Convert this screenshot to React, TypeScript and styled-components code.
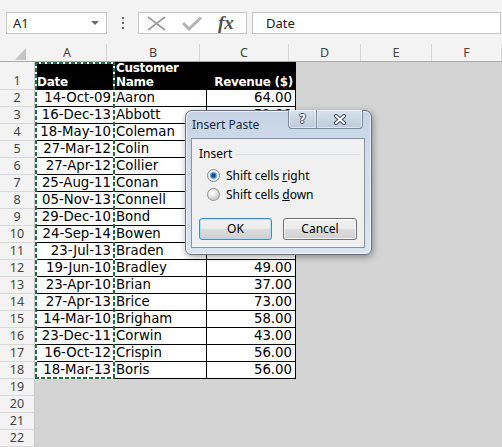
import React from 'react';
import styled, { createGlobalStyle } from 'styled-components';

const GlobalStyle = createGlobalStyle`
  html, body {
    margin: 0;
    padding: 0;
    background: #d4d4d4;
  }
  body {
    font-family: "Noto Sans", "Open Sans", sans-serif;
  }
`;

// sheet data
const COLS = [
  { label: 'A', width: 79 },
  { label: 'B', width: 93 },
  { label: 'C', width: 89 },
  { label: 'D', width: 72 },
  { label: 'E', width: 71 },
  { label: 'F', width: 70 },
];

const ROWS: [string, string, string][] = [
  ['14-Oct-09', 'Aaron', '64.00'],
  ['16-Dec-13', 'Abbott', '51.00'],
  ['18-May-10', 'Coleman', '72.00'],
  ['27-Mar-12', 'Colin', '44.00'],
  ['27-Apr-12', 'Collier', '39.00'],
  ['25-Aug-11', 'Conan', '61.00'],
  ['05-Nov-13', 'Connell', '47.00'],
  ['29-Dec-10', 'Bond', '53.00'],
  ['24-Sep-14', 'Bowen', '68.00'],
  ['23-Jul-13', 'Braden', '50.00'],
  ['19-Jun-10', 'Bradley', '49.00'],
  ['23-Apr-10', 'Brian', '37.00'],
  ['27-Apr-13', 'Brice', '73.00'],
  ['14-Mar-10', 'Brigham', '58.00'],
  ['23-Dec-11', 'Corwin', '43.00'],
  ['16-Oct-12', 'Crispin', '56.00'],
  ['18-Mar-13', 'Boris', '56.00'],
];

const EMPTY_ROWS = [19, 20, 21, 22];

// window
const Window = styled.div`
  width: 502px;
  height: 447px;
  position: relative;
  overflow: hidden;
  display: flex;
  flex-direction: column;
`;

// formula bar
const FormulaBar = styled.div`
  height: 44px;
  box-sizing: border-box;
  padding: 12px 1px 0 6px;
  background: #f3f3f3;
  display: flex;
  align-items: flex-start;
`;

const NameBox = styled.div`
  width: 101px;
  height: 22px;
  box-sizing: border-box;
  border: 1px solid #c6c6c6;
  background: #fff;
  display: flex;
  align-items: center;
  justify-content: space-between;
  padding: 0 7px 0 6px;
  font-size: 13px;
  color: #222;
`;

const DropArrow = styled.span`
  width: 0;
  height: 0;
  border-left: 4px solid transparent;
  border-right: 4px solid transparent;
  border-top: 4px solid #6a6a6a;
`;

const Dots = styled.div`
  width: 31px;
  height: 22px;
  display: flex;
  flex-direction: column;
  align-items: center;
  justify-content: center;
  gap: 3px;
  span {
    width: 2px;
    height: 2px;
    background: #666;
  }
`;

const FxTools = styled.div`
  width: 109px;
  height: 22px;
  box-sizing: border-box;
  border: 1px solid #c6c6c6;
  background: #fff;
  display: flex;
  align-items: center;
  padding-left: 8px;
  gap: 16px;
`;

const FxLabel = styled.span`
  font-family: "Liberation Serif", serif;
  font-style: italic;
  font-weight: bold;
  font-size: 19px;
  color: #505050;
  line-height: 20px;
`;

const FormulaInput = styled.div`
  flex: 1;
  height: 22px;
  margin-left: 5px;
  box-sizing: border-box;
  border: 1px solid #c6c6c6;
  background: #fff;
  padding-left: 13px;
  font-size: 13px;
  line-height: 20px;
  color: #222;
`;

// sheet
const Sheet = styled.div`
  flex: 1;
  position: relative;
  background: #d4d4d4;
  display: flex;
  flex-direction: column;
`;

const HeaderRow = styled.div`
  height: 18px;
  display: flex;
  background: #f3f3f3;
  box-sizing: border-box;
  border-bottom: 1px solid #ababab;
`;

const Corner = styled.div`
  width: 35px;
  display: flex;
  align-items: flex-end;
  justify-content: flex-end;
  padding: 0 2px 1px 0;
  box-sizing: border-box;
`;

const ColHead = styled.div<{ $w: number }>`
  width: ${(p) => p.$w}px;
  flex: none;
  box-sizing: border-box;
  border-right: 1px solid #d5d5d5;
  text-align: center;
  font-size: 12.5px;
  line-height: 17px;
  color: #444;
`;

const Row = styled.div<{ $h: number }>`
  height: ${(p) => p.$h}px;
  display: grid;
  grid-template-columns: 35px 79px 93px 89px;
`;

const RowHead = styled.div`
  box-sizing: border-box;
  background: #f3f3f3;
  border-bottom: 1px solid #d8d8d8;
  border-right: 1px solid #c8c8c8;
  display: flex;
  align-items: flex-end;
  justify-content: center;
  font-size: 12.5px;
  line-height: 16px;
  color: #444;
`;

const Cell = styled.div<{
  $align: 'left' | 'right';
  $head?: boolean;
  $divider?: boolean;
}>`
  box-sizing: border-box;
  background: ${(p) => (p.$head ? '#000' : '#fff')};
  color: ${(p) => (p.$head ? '#fff' : '#000')};
  font-family: "DejaVu Sans", Verdana, sans-serif;
  font-size: ${(p) => (p.$head ? '12px' : '13.3px')};
  letter-spacing: ${(p) => (p.$head ? '-0.3px' : '0')};
  font-weight: ${(p) => (p.$head ? 'bold' : 'normal')};
  line-height: ${(p) => (p.$head ? '14px' : '16px')};
  border-bottom: 1px solid #000;
  border-right: ${(p) => (p.$divider ? '1px solid #000' : 'none')};
  display: flex;
  align-items: flex-end;
  justify-content: ${(p) => (p.$align === 'right' ? 'flex-end' : 'flex-start')};
  text-align: ${(p) => p.$align};
  padding: ${(p) => (p.$align === 'right' ? `0 ${p.$head ? 2 : 3}px 0 0` : '0 0 0 2px')};
  white-space: ${(p) => (p.$head ? 'normal' : 'nowrap')};
  overflow: hidden;
`;

const dashH = 'repeating-linear-gradient(90deg, #1f6e43 0 4px, #fff 4px 6px)';
const dashV = 'repeating-linear-gradient(180deg, #1f6e43 0 4px, #fff 4px 6px)';

// copy marquee lies over column A
const Marquee = styled.div`
  position: absolute;
  left: 35px;
  top: 18px;
  width: 80px;
  height: 317px;
  pointer-events: none;
  background:
    ${dashH} top left / 100% 2px no-repeat,
    ${dashH} bottom left / 100% 2px no-repeat,
    ${dashV} top left / 2px 100% no-repeat,
    ${dashV} top right / 2px 100% no-repeat;
`;

// dialog
const Dialog = styled.div`
  position: absolute;
  left: 185px;
  top: 110px;
  width: 187px;
  height: 145px;
  box-sizing: border-box;
  border: 1px solid #66717f;
  border-radius: 7px 7px 6px 6px;
  background: linear-gradient(180deg, #c6d4e6 0%, #d3deeb 40%, #dbe4ef 100%);
  box-shadow: inset 0 0 0 1px rgba(255, 255, 255, 0.6), 1px 2px 7px rgba(0, 0, 0, 0.35);
  display: flex;
  flex-direction: column;
  font-family: "Noto Sans", "Open Sans", sans-serif;
  font-size: 12px;
  color: #000;
`;

const TitleBar = styled.div`
  height: 27px;
  display: flex;
  justify-content: space-between;
  align-items: flex-start;
  padding: 0 8px 0 6px;
`;

const Title = styled.div`
  padding-top: 6px;
  line-height: 16px;
  color: #1a2a3c;
`;

const CaptionButtons = styled.div`
  display: flex;
  margin-top: -1px;
`;

const CapBtn = styled.div<{ $w: number; $side: 'left' | 'right' }>`
  width: ${(p) => p.$w}px;
  height: 19px;
  box-sizing: border-box;
  border: 1px solid #7a8ba2;
  border-top: none;
  border-left: ${(p) => (p.$side === 'right' ? 'none' : '1px solid #7a8ba2')};
  border-radius: ${(p) => (p.$side === 'left' ? '0 0 0 4px' : '0 0 4px 0')};
  background: linear-gradient(180deg, #d9e3ee 0%, #c9d6e5 50%, #bccbdd 100%);
  box-shadow: inset 0 0 0 1px rgba(255, 255, 255, 0.45);
  display: flex;
  align-items: center;
  justify-content: center;
`;

const HelpGlyph = styled.span`
  font-family: "DejaVu Sans", sans-serif;
  font-weight: bold;
  font-size: 12px;
  line-height: 12px;
  color: #fff;
  text-shadow: 1px 0 0 #3d4b5e, -1px 0 0 #3d4b5e, 0 1px 0 #3d4b5e, 0 -1px 0 #3d4b5e;
`;

const Panel = styled.div`
  flex: 1;
  margin: 0 6px 6px 5px;
  box-sizing: border-box;
  background: #f0f0f0;
  border: 1px solid #8494a8;
  padding: 7px 4px 0 7px;
  display: flex;
  flex-direction: column;
`;

const GroupHead = styled.div`
  display: flex;
  align-items: center;
  gap: 4px;
  line-height: 16px;
  &::after {
    content: '';
    flex: 1;
    height: 1px;
    background: #d5dfe5;
  }
`;

const RadioList = styled.div`
  margin-top: 4px;
  display: flex;
  flex-direction: column;
`;

const RadioRow = styled.div`
  height: 19px;
  display: flex;
  align-items: center;
  gap: 6px;
  padding-left: 8px;
  white-space: nowrap;
`;

const RadioDot = styled.span<{ $on?: boolean }>`
  width: 13px;
  height: 13px;
  box-sizing: border-box;
  border-radius: 50%;
  border: 1px solid #8e8f8f;
  background: ${(p) =>
    p.$on
      ? 'radial-gradient(circle, #0c4f91 0 1.5px, #3b8ad6 2.5px, #8fc5ef 3.5px, #f2f2f2 4px, #e2e2e2 6px)'
      : 'radial-gradient(circle at 40% 35%, #ffffff 0, #e6e6e6 4px, #cfcfcf 6px)'};
  flex: none;
`;

const ButtonRow = styled.div`
  margin-top: 14px;
  display: flex;
  gap: 11px;
`;

const Button = styled.div<{ $w: number; $default?: boolean }>`
  width: ${(p) => p.$w}px;
  height: 22px;
  box-sizing: border-box;
  border: 1px solid ${(p) => (p.$default ? '#3c8fcf' : '#707070')};
  border-radius: 3px;
  background: linear-gradient(180deg, #f2f2f2 0%, #ebebeb 50%, #dddddd 51%, #cfcfcf 100%);
  box-shadow: inset 0 0 0 1px ${(p) => (p.$default ? 'rgba(160, 225, 250, 0.9)' : 'rgba(255, 255, 255, 0.8)')};
  display: flex;
  align-items: center;
  justify-content: center;
  line-height: 16px;
`;

function CloseGlyph() {
  return (
    <svg width="14" height="11" viewBox="0 0 14 11">
      <path d="M3 2 L11 9 M11 2 L3 9" stroke="#3d4b5e" strokeWidth="4" strokeLinecap="round" />
      <path d="M3 2 L11 9 M11 2 L3 9" stroke="#fff" strokeWidth="2" strokeLinecap="round" />
    </svg>
  );
}

export default function App() {
  return (
    <>
      <GlobalStyle />
      <Window>
        <FormulaBar>
          <NameBox>
            <span>A1</span>
            <DropArrow />
          </NameBox>
          <Dots>
            <span />
            <span />
            <span />
          </Dots>
          <FxTools>
            <svg width="19" height="15" viewBox="0 0 19 15">
              <path d="M1 1 L18 14 M18 1 L1 14" stroke="#9c9c9c" strokeWidth="1.6" />
            </svg>
            <svg width="20" height="15" viewBox="0 0 20 15">
              <path d="M1 7 L7 13 L19 1.5" stroke="#b4b4b4" strokeWidth="3" fill="none" />
            </svg>
            <FxLabel>fx</FxLabel>
          </FxTools>
          <FormulaInput>Date</FormulaInput>
        </FormulaBar>

        <Sheet>
          <HeaderRow>
            <Corner>
              <svg width="11" height="12" viewBox="0 0 11 12">
                <path d="M11 0 L11 12 L0 12 Z" fill="#c4c4c4" />
              </svg>
            </Corner>
            {COLS.map((c) => (
              <ColHead key={c.label} $w={c.width}>
                {c.label}
              </ColHead>
            ))}
          </HeaderRow>

          <Row $h={28}>
            <RowHead>1</RowHead>
            <Cell $align="left" $head>Date</Cell>
            <Cell $align="left" $head $divider>Customer Name</Cell>
            <Cell $align="right" $head $divider>Revenue&nbsp;($)</Cell>
          </Row>
          {ROWS.map(([date, name, rev], i) => (
            <Row $h={17} key={date + name}>
              <RowHead>{i + 2}</RowHead>
              <Cell $align="right">{date}</Cell>
              <Cell $align="left" $divider>{name}</Cell>
              <Cell $align="right" $divider>{rev}</Cell>
            </Row>
          ))}
          {EMPTY_ROWS.map((n) => (
            <Row $h={17} key={n}>
              <RowHead>{n}</RowHead>
            </Row>
          ))}

          <Marquee />
        </Sheet>

        <Dialog>
          <TitleBar>
            <Title>Insert Paste</Title>
            <CaptionButtons>
              <CapBtn $w={29} $side="left">
                <HelpGlyph>?</HelpGlyph>
              </CapBtn>
              <CapBtn $w={46} $side="right">
                <CloseGlyph />
              </CapBtn>
            </CaptionButtons>
          </TitleBar>
          <Panel>
            <GroupHead>Insert</GroupHead>
            <RadioList>
              <RadioRow>
                <RadioDot $on />
                <span>Shift cells <u>r</u>ight</span>
              </RadioRow>
              <RadioRow>
                <RadioDot />
                <span>Shift cells <u>d</u>own</span>
              </RadioRow>
            </RadioList>
            <ButtonRow>
              <Button $w={73} $default>OK</Button>
              <Button $w={74}>Cancel</Button>
            </ButtonRow>
          </Panel>
        </Dialog>
      </Window>
    </>
  );
}
